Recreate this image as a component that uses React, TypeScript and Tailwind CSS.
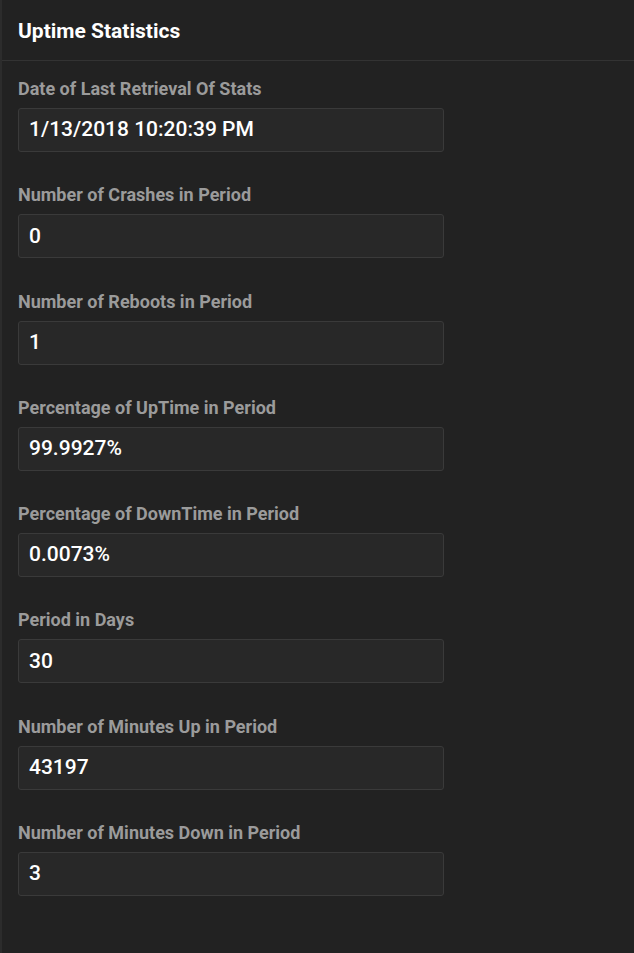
const fields: { label: string; value: string }[] = [
  { label: "Date of Last Retrieval Of Stats", value: "1/13/2018 10:20:39 PM" },
  { label: "Number of Crashes in Period", value: "0" },
  { label: "Number of Reboots in Period", value: "1" },
  { label: "Percentage of UpTime in Period", value: "99.9927%" },
  { label: "Percentage of DownTime in Period", value: "0.0073%" },
  { label: "Period in Days", value: "30" },
  { label: "Number of Minutes Up in Period", value: "43197" },
  { label: "Number of Minutes Down in Period", value: "3" },
];

export default function App() {
  return (
    <div className="min-h-[953px] w-[634px] bg-[#222222] border-l-2 border-[#2c2c2c] font-['Roboto',sans-serif]">
      {/* header */}
      <div className="h-[61px] border-b border-[#333333] pl-4 pt-[3px] flex items-center">
        <span className="text-[21px] font-bold text-white">Uptime Statistics</span>
      </div>

      <div className="pl-4 pt-[18px]">
        {fields.map((f) => (
          <div key={f.label} className="h-[106.3px]">
            <div className="h-5 leading-5 text-[18px] font-bold text-[#9b9b9b]">
              {f.label}
            </div>
            <div className="mt-[9px] w-[426px] h-[44px] rounded-[3px] border border-[#3a3a3a] bg-[#282828] px-[10px] flex items-center text-[21px] font-medium text-white">
              {f.value}
            </div>
          </div>
        ))}
      </div>
    </div>
  );
}
